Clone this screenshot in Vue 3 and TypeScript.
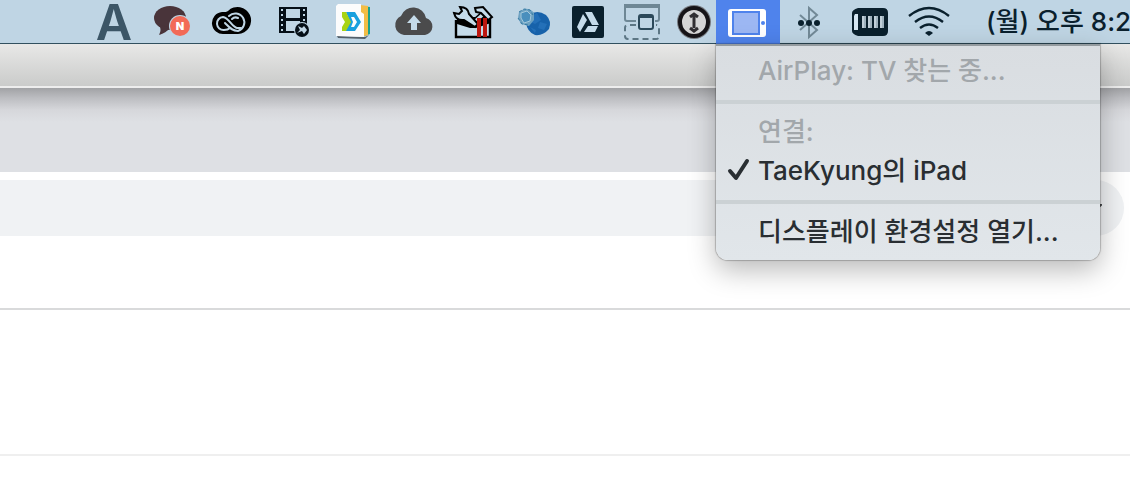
<script setup lang="ts">
import { ref } from 'vue'

interface Display {
  name: string
  connected: boolean
}

const menuOpen = ref(true)
const displays = ref<Display[]>([{ name: 'TaeKyung의 iPad', connected: true }])

const toggle = (display: Display): void => {
  display.connected = !display.connected
}

const filmHoles: number[] = [9, 14, 19, 24, 29]
const batteryBars: number[] = [862, 868, 874, 880]
</script>

<template>
  <div class="desktop">
    <header class="menubar">
      <button class="status letter" type="button" aria-label="입력기">A</button>

      <button class="status" type="button" aria-label="메신저">
        <svg width="48" height="43" viewBox="148 0 48 43">
          <ellipse cx="170" cy="18" rx="16" ry="12" fill="#49343a" />
          <path d="M159 24 Q162 30 159 35 Q166 33 170 28 Z" fill="#49343a" />
          <circle cx="180" cy="26" r="11" fill="#bfd5e4" />
          <circle cx="180" cy="26" r="10" fill="#f26a57" />
          <text x="180" y="30" text-anchor="middle" class="badge">N</text>
        </svg>
      </button>

      <button class="status" type="button" aria-label="Creative Cloud">
        <svg width="72" height="43" viewBox="196 0 72 43">
          <path d="M224 34 A11 11 0 0 1 222 12 C225 12 227 12 228 11 A13.5 13.5 0 1 1 238 34 Z" fill="#000" />
          <g fill="none" stroke="#bfd5e4" stroke-width="2" stroke-linecap="round">
            <path d="M241 28 H237 C232 27 229 18 223 17 A6.5 6.5 0 1 0 224 30 C227 30 229 29 230 28" />
            <path d="M229 16 A9 9 0 1 1 238 31 C232 31 229 27 225 23" />
            <path d="M232 19 C234 17 236 17 238 18" />
          </g>
        </svg>
      </button>

      <button class="status" type="button" aria-label="동영상 변환">
        <svg width="52" height="43" viewBox="268 0 52 43">
          <path d="M279 7 H307 V33 H279 Z" fill="#050f17" />
          <path d="M286 9 H300 V18 H286 Z M286 21 H300 V31 H286 Z" fill="#bfd5e4" />
          <g fill="#bfd5e4">
            <rect v-for="y in filmHoles" :key="y" x="281" :y="y" width="2" height="2" />
            <rect v-for="y in filmHoles" :key="`r${y}`" x="303" :y="y" width="2" height="2" />
          </g>
          <circle cx="302" cy="30" r="8" fill="#bfd5e4" />
          <circle cx="302" cy="30" r="7" fill="#050f17" />
          <path d="M298 26 L302 28 L304 26 L307 30 L304 34 L302 31 L297 33 L300 30 Z" fill="#bfd5e4" />
        </svg>
      </button>

      <button class="status" type="button" aria-label="문서">
        <svg width="66" height="43" viewBox="320 0 66 43">
          <path d="M337 36 L365 37 L369 35 L365 39 L338 38 Z" fill="#53606a" />
          <path d="M361 6 L370 7 V34 L362 37 Z" fill="#1ca18d" />
          <path d="M360 5 L368 6 V35 L361 37 Z" fill="#f3bd45" />
          <path d="M338 4 H361 V12 L364 14 V37 L336 36 V6 Z" fill="#fcfcfc" />
          <path
            d="M346 12 H355 L361 22 L355 31 H345 L350 22 Z M351 17 L353 22 L351 27 H354 L357 22 L354 17 Z"
            fill="#18a0de"
            fill-rule="evenodd"
          />
          <path d="M342 12 H346 L351 22 L346 31 H342 V27 L345 22 L342 17 Z" fill="#a8d313" />
        </svg>
      </button>

      <button class="status" type="button" aria-label="클라우드 업로드">
        <svg width="56" height="43" viewBox="386 0 56 43">
          <path d="M404 35 A10 10 0 0 1 401 16 A13 13 0 0 1 426 18 A8.7 8.7 0 0 1 425 35 Z" fill="#4b4b4c" />
          <path d="M414 15 L421 23 H417 V30 H411 V23 H407 Z" fill="#c5dbea" />
        </svg>
      </button>

      <button class="status" type="button" aria-label="도구 상자">
        <svg width="62" height="43" viewBox="442 0 62 43">
          <path d="M456 20 V37 H490 V19" fill="#c5dbea" stroke="#000" stroke-width="2.4" />
          <path d="M457 17 H491 V23 L476 28 H470 L457 24 Z" fill="#000" />
          <path d="M473 20 L482 12 L486 15 L477 23 Z" fill="#c5dbea" stroke="#000" stroke-width="1.6" />
          <path d="M475 8 L483 7 L492 17 L488 20 L481 13 L476 12 Z" fill="#c5dbea" stroke="#000" stroke-width="2" />
          <path d="M454 13 L459 14 L462 11 L460 7 Q468 7 469 14 L478 24 L475 27 L464 20 Q456 21 454 13 Z" fill="#c5dbea" stroke="#000" stroke-width="2" />
          <path d="M477 18 H481 V37 H477 Z M483 18 H487 V37 H483 Z" fill="#bd1710" />
        </svg>
      </button>

      <button class="status" type="button" aria-label="네트워크">
        <svg width="60" height="43" viewBox="504 0 60 43">
          <path d="M529 15 Q537 9 546 15 Q552 21 549 29 Q543 36 535 35 Q527 32 526 22 Z" fill="#1762aa" />
          <path d="M531 16 L537 13 L541 20 L535 24 L529 21 Z M540 22 L547 24 L544 30 L538 28 Z M530 27 L536 30 L535 33 Z" fill="#2470b8" />
          <path d="M524 9 Q530 8 534 13 V20 L529 26 L521 24 L518 18 L519 12 Z" fill="#6da1c1" />
          <path d="M521 13 L527 11 L531 15 L530 21 L524 23 L521 18 Z" fill="#4a8fbd" stroke="#a4c9dc" />
          <path d="M519 12 L524 9 L530 10 L533 15 M518 18 L522 24 L529 25" fill="none" stroke="#347aa3" stroke-dasharray="3 2" />
        </svg>
      </button>

      <button class="status" type="button" aria-label="드라이브">
        <svg width="48" height="43" viewBox="564 0 48 43">
          <rect x="572" y="6" width="32" height="32" rx="2" fill="#0a202d" />
          <path d="M585 12 H592 L599 25 H592 Z M583 14 L587 20 L580 32 L577 27 Z M588 26 H598 L595 32 H584 Z" fill="#c5dbea" />
        </svg>
      </button>

      <button class="status" type="button" aria-label="윈도우 정렬">
        <svg width="60" height="43" viewBox="612 0 60 43">
          <path d="M636 21 H627 Q625 21 625 19 V5 H659 V19 Q659 21 657 21 H655" fill="none" stroke="#6e8795" stroke-width="2" />
          <path d="M626 4 H658 V8 H626 Z" fill="#6e8795" />
          <path d="M636 25 H628 Q625 25 625 28 V36 Q625 39 628 39 H656 Q659 39 659 36 V28 Q659 25 656 25" fill="none" stroke="#5c7684" stroke-width="2" stroke-dasharray="6 4" />
          <rect x="639" y="15" width="14" height="14" rx="2" fill="#bfd5e4" stroke="#2c495a" stroke-width="2" />
          <path d="M639 15 H653 V18 H639 Z" fill="#2c495a" />
        </svg>
      </button>

      <button class="status" type="button" aria-label="스크롤">
        <svg width="44" height="43" viewBox="672 0 44 43">
          <circle cx="694" cy="22" r="17" fill="#777b80" />
          <circle cx="694" cy="22" r="14" fill="#d5d5d5" stroke="#161417" stroke-width="4" />
          <path d="M694 16 V28 M690 17 L694 14 L698 17 M690 28 L694 31 L698 28" fill="none" stroke="#302e31" stroke-width="3" />
        </svg>
      </button>

      <div class="display-menu">
        <button
          class="status active"
          type="button"
          aria-label="디스플레이"
          aria-haspopup="menu"
          :aria-expanded="menuOpen"
          @click="menuOpen = !menuOpen"
        >
          <svg width="64" height="43" viewBox="716 0 64 43">
            <rect x="728" y="8" width="38" height="28" rx="3" fill="#fff" />
            <rect x="733" y="11" width="26" height="22" fill="#9cb7f3" stroke="#4f83ec" stroke-width="2" />
            <circle cx="763" cy="22" r="2" fill="#4f83ec" />
          </svg>
        </button>

        <div v-if="menuOpen" class="menu" role="menu">
          <button class="item" type="button" role="menuitem" disabled>AirPlay: TV 찾는 중...</button>
          <hr class="separator" />
          <button class="item" type="button" role="menuitem" disabled>연결:</button>
          <button
            v-for="display in displays"
            :key="display.name"
            class="item"
            type="button"
            role="menuitemcheckbox"
            :aria-checked="display.connected"
            @click="toggle(display)"
          >
            <svg v-if="display.connected" class="check" width="24" height="24" viewBox="0 0 24 24">
              <path d="M3 13 L9 20 L20 3" fill="none" stroke="#292e32" stroke-width="4" stroke-linecap="round" stroke-linejoin="round" />
            </svg>
            {{ display.name }}
          </button>
          <hr class="separator" />
          <button class="item" type="button" role="menuitem">디스플레이 환경설정 열기...</button>
        </div>
      </div>

      <button class="status" type="button" aria-label="Bluetooth">
        <svg width="58" height="43" viewBox="780 0 58 43">
          <path d="M800 15 L817 30 L809 37 V8 L817 15 L800 30" fill="none" stroke="#728996" stroke-width="2" />
          <g fill="#0a202d">
            <circle cx="801" cy="23" r="3" />
            <circle cx="809" cy="23" r="3" />
            <circle cx="817" cy="23" r="3" />
          </g>
        </svg>
      </button>

      <button class="status" type="button" aria-label="메모리">
        <svg width="64" height="43" viewBox="838 0 64 43">
          <path d="M858 8 H883 Q888 8 888 13 V31 Q888 36 883 36 H858 Q852 34 852 31 V13 Q852 10 858 8 Z" fill="#0a202d" />
          <path d="M855 14 H858 V30 H854 V16 Z" fill="#d4e6f2" />
          <rect v-for="x in batteryBars" :key="x" :x="x" y="16" width="4" height="12" fill="#9fb2be" />
          <path v-for="x in batteryBars" :key="`l${x}`" :d="`M${x + 1} 16 V28`" stroke="#e2edf4" />
        </svg>
      </button>

      <button class="status" type="button" aria-label="Wi-Fi">
        <svg width="54" height="43" viewBox="902 0 54 43">
          <g fill="none" stroke="#0a202d" stroke-width="2.4">
            <path d="M909 16 Q929 0 949 16" />
            <path d="M915 22 Q929 11 943 22" />
            <path d="M920 28 Q929 21 938 28" />
          </g>
          <path d="M925 33 Q929 29 933 33 L929 36 Z" fill="#0a202d" />
        </svg>
      </button>

      <time class="clock">(월) 오후 8:2</time>
    </header>

    <div class="titlebar"></div>
    <main class="window">
      <div class="tabs"></div>
      <div class="toolbar">
        <input class="address" type="text" aria-label="주소" />
        <svg class="star" width="24" height="24" viewBox="0 0 24 24" aria-hidden="true">
          <path d="M12 2 L15 9 H23 L17 14 L19 22 L12 17 L5 22 L7 14 L1 9 H9 Z" fill="none" stroke="#4a4d50" stroke-width="2" />
        </svg>
      </div>
      <div class="content"></div>
    </main>
  </div>
</template>

<style>
body {
  margin: 0;
  background: #fff;
}
</style>

<style scoped>
.desktop {
  min-height: 100vh;
  overflow: hidden;
  background: #fff;
  color: #292e32;
  font-family: Inter, 'Noto Sans CJK KR', sans-serif;
}

button {
  margin: 0;
  padding: 0;
  border: 0;
  background: none;
  color: inherit;
  font-family: inherit;
}

.menubar {
  position: relative;
  z-index: 1;
  display: flex;
  height: 43px;
  padding-left: 80px;
  border-bottom: 1px solid #31505f;
  background: #bfd5e4;
}

.status {
  flex: none;
  display: block;
  height: 43px;
}

.status svg {
  display: block;
}

.letter {
  width: 68px;
  color: #3c5667;
  font-size: 50px;
  font-weight: 600;
  line-height: 44px;
}

.badge {
  fill: #fff;
  font-size: 11px;
  font-weight: 900;
}

.display-menu {
  flex: none;
  position: relative;
}

.active {
  height: 44px;
  background: #4f83ec;
}

.menu {
  position: absolute;
  top: 44px;
  left: 0;
  box-sizing: border-box;
  width: 384px;
  padding: 5px 0 9px;
  border-top: 2px solid #949b9f;
  border-radius: 0 0 12px 12px;
  background: linear-gradient(#d9dde1, #e1e6ea);
  box-shadow: 0 0 1px 1px rgba(0, 0, 0, 0.22), 0 10px 28px rgba(0, 0, 0, 0.28);
}

.item {
  position: relative;
  display: block;
  width: 100%;
  height: 39px;
  padding-left: 42px;
  font-size: 26px;
  font-weight: 500;
  line-height: 39px;
  text-align: left;
  white-space: nowrap;
}

.item:disabled {
  color: #a2a7ab;
}

.check {
  position: absolute;
  top: 7px;
  left: 11px;
}

.separator {
  height: 4px;
  margin: 10px 0 8px;
  border: 0;
  background: #cbd1d4;
}

.clock {
  padding-left: 30px;
  color: #0a202d;
  font-size: 26px;
  font-weight: 500;
  line-height: 44px;
  white-space: nowrap;
}

.titlebar {
  height: 42px;
  border-bottom: 2px solid #ededed;
  background: linear-gradient(#e8e8e7, #cacbca);
}

.tabs {
  height: 84px;
  background: linear-gradient(#a1a2a5, #bcbdc1 10px, #d6d7db 22px, #dee0e4 34px);
}

.toolbar {
  display: flex;
  position: relative;
  padding: 8px 6px 72px 0;
  border-bottom: 2px solid #d9dadb;
}

.address {
  flex: 1;
  height: 56px;
  box-sizing: border-box;
  padding: 0 40px;
  border: 0;
  border-radius: 0 28px 28px 0;
  background: #f0f2f4;
}

.star {
  position: absolute;
  right: 28px;
  top: 24px;
}

.content {
  height: 144px;
  border-bottom: 2px solid #efefef;
}
</style>
